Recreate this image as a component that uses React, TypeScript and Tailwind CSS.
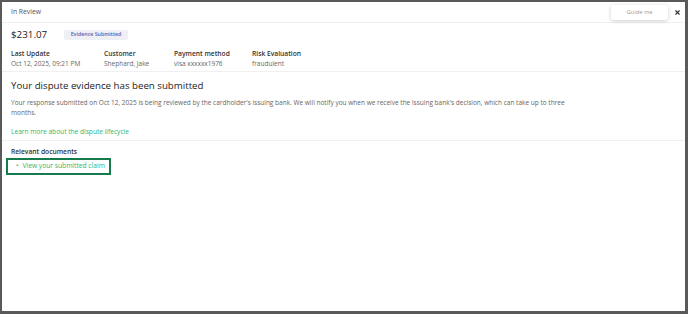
import { X } from 'lucide-react';

const details = [
  { label: 'Last Update', value: 'Oct 12, 2025, 09:21 PM', width: 'w-[93px]' },
  { label: 'Customer', value: 'Shephard, Jake', width: 'w-[70px]' },
  { label: 'Payment method', value: 'visa xxxxxx1976', width: 'w-[78px]' },
  { label: 'Risk Evaluation', value: 'fraudulent', width: 'w-[80px]' },
];

export default function App() {
  return (
    <div
      className="h-[314px] w-[688px] bg-[#5a5a5a] pt-[2px] pl-[2px] pr-[3px] pb-[3px]"
      style={{ fontFamily: '"Open Sans", "Noto Sans", sans-serif' }}
    >
      <div className="flex h-full flex-col bg-white">
        {/* Header */}
        <div className="flex h-[21px] items-center justify-between border-b border-[#f0f0f0] pl-[9px] pr-[4px]">
          <span className="text-[6.8px] text-[#555]">In Review</span>
          <div className="flex items-center gap-[6px]">
            <button className="flex h-[15px] w-[57px] items-center justify-center rounded-[3px] bg-white text-[5.8px] text-[#9a9a9a] shadow-[0_1px_4px_rgba(0,0,0,0.2)]">
              Guide me
            </button>
            <X className="h-[7px] w-[7px] text-[#333]" strokeWidth={4} />
          </div>
        </div>

        {/* Summary */}
        <div className="border-b border-[#f0f0f0] px-[9px] pt-[5px] pb-[3px]">
          <div className="flex h-[14px] items-center">
            <span className="w-[53px] text-[9.8px] leading-[14px] text-[#222]">$231.07</span>
            <span className="flex h-[10px] w-[64px] items-center justify-center rounded-[2px] bg-[#eef0f6] text-[5.3px] font-semibold text-[#4d63b3]">
              Evidence Submitted
            </span>
          </div>
          <div className="mt-[7px] flex">
            {details.map((d) => (
              <div key={d.label} className={d.width}>
                <div className="text-[6.7px] leading-[9.5px] font-semibold text-[#333]">{d.label}</div>
                <div className="text-[6.5px] leading-[9.5px] text-[#666]">{d.value}</div>
              </div>
            ))}
          </div>
        </div>

        {/* Status message */}
        <div className="border-b border-[#f0f0f0] px-[9px] pt-[7px] pb-[3.5px]">
          <h2 className="text-[9.7px] leading-[14px] text-[#222]">Your dispute evidence has been submitted</h2>
          <p className="mt-[5px] max-w-[560px] text-[6.5px] leading-[9.5px] text-[#666]">
            Your response submitted on Oct 12, 2025 is being reviewed by the cardholder's issuing bank. We will
            notify you when we receive the issuing bank's decision, which can take up to three months.
          </p>
          <a className="mt-[9.5px] block text-[6.6px] leading-[9.5px] text-[#2db673]">
            Learn more about the dispute lifecycle
          </a>
        </div>

        {/* Documents */}
        <div className="px-[9px] pt-[6.5px]">
          <div className="text-[6.7px] leading-[9.5px] font-semibold text-[#333]">Relevant documents</div>
          <div className="mt-[1px] -ml-[5px] flex h-[17px] w-[105px] items-center border-2 border-[#157a4c] pl-[8px]">
            <span className="mr-[4px] text-[6.5px] leading-none text-[#2db673]">•</span>
            <a className="text-[6.7px] leading-none font-medium text-[#2db673]">View your submitted claim</a>
          </div>
        </div>
      </div>
    </div>
  );
}
